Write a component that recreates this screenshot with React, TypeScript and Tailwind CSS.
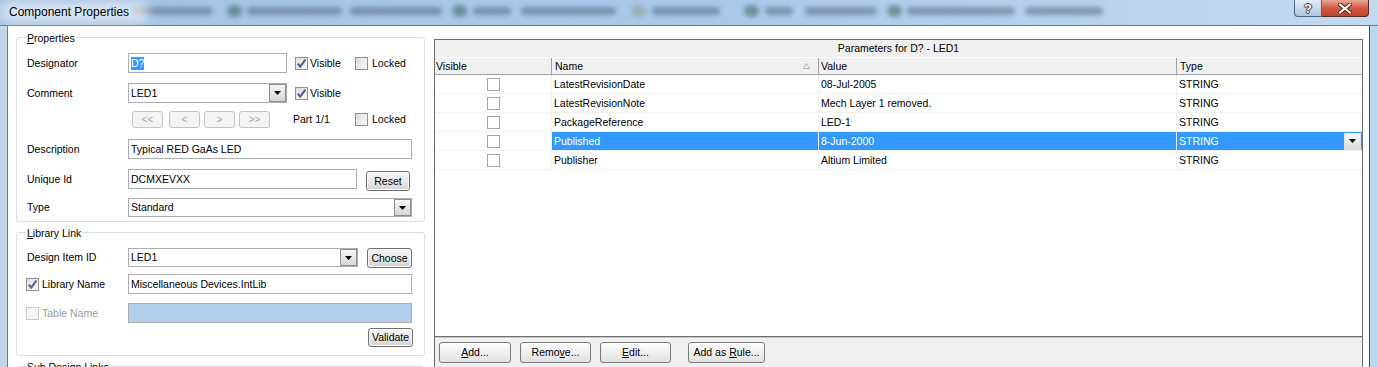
import React from 'react';

interface Param {
	name: string;
	value: string;
	selected?: boolean;
}

const params: Param[] = [
	{name: 'LatestRevisionDate', value: '08-Jul-2005'},
	{name: 'LatestRevisionNote', value: 'Mech Layer 1 removed.'},
	{name: 'PackageReference', value: 'LED-1'},
	{name: 'Published', value: '8-Jun-2000', selected: true},
	{name: 'Publisher', value: 'Altium Limited'},
];

const Check: React.FC<{checked?: boolean; disabled?: boolean}> = ({checked = false, disabled = false}) => (
	<span
		className={`flex h-[13px] w-[13px] shrink-0 items-center justify-center border ${
			disabled ? 'border-[#cacaca] bg-[#f4f4f4]' : 'border-[#8e8f8f] bg-linear-to-br from-[#dcdcdc] to-[#fbfbfb]'
		}`}
	>
		{checked && (
			<svg width="11" height="11" viewBox="0 0 11 11">
				<path d="M1.8 5.6 L4.2 8.6 L9.4 1.6" fill="none" stroke="#4a5f97" strokeWidth="2" />
			</svg>
		)}
	</span>
);

const Arrow = () => (
	<svg width="7" height="4" viewBox="0 0 7 4">
		<path d="M0 0h7L3.5 4z" fill="#000" />
	</svg>
);

const DropBtn: React.FC = () => (
	<span className="flex w-[17px] shrink-0 items-center justify-center border border-[#8d8d8d] bg-linear-to-b from-[#f6f6f6] to-[#d7d7d7]">
		<Arrow />
	</span>
);

const Combo: React.FC<{value: string; className: string}> = ({value, className}) => (
	<div className={`flex items-stretch border border-[#abadb3] bg-white ${className}`}>
		<span className="flex flex-1 items-center pl-[2px]">{value}</span>
		<DropBtn />
	</div>
);

const TextBox: React.FC<{value?: string; className: string}> = ({value, className}) => (
	<div className={`flex items-center border border-[#abadb3] pl-[2px] ${className}`}>{value}</div>
);

const Btn: React.FC<{children: React.ReactNode; className?: string}> = ({children, className = ''}) => (
	<div
		className={`flex shrink-0 items-center justify-center rounded-[3px] border border-[#707070] bg-linear-to-b from-[#f4f4f4] via-[#e9e9e9] to-[#d2d2d2] shadow-[inset_0_0_0_1px_#fbfbfb] ${className}`}
	>
		{children}
	</div>
);

const NavBtn: React.FC<{label: string; className?: string}> = ({label, className = ''}) => (
	<div
		className={`flex h-full w-[31px] items-center justify-center rounded-[3px] border border-[#c3c3c3] bg-[#f4f4f4] text-[10px] text-[#a3a3a3] ${className}`}
	>
		{label}
	</div>
);

const BarBtn: React.FC<{children: React.ReactNode; className: string}> = ({children, className}) => (
	<div
		className={`flex h-[21px] items-center justify-center rounded-[3px] border border-[#7a7a7a] bg-linear-to-b from-[#fdfdfd] to-[#e2e2e2] ${className}`}
	>
		<span className="whitespace-pre">{children}</span>
	</div>
);

const GroupLabel: React.FC<{children: React.ReactNode}> = ({children}) => (
	<span className="absolute -top-[6px] left-[9px] bg-white px-[1px] leading-[13px]">{children}</span>
);

// smeared task buttons seen through the glass caption
const Smear: React.FC<{className: string}> = ({className}) => (
	<span className={`h-[8px] shrink-0 rounded-[4px] bg-[#4a5d74] ${className}`} />
);

const Dot: React.FC<{className?: string}> = ({className = 'bg-[#2f5b47]'}) => (
	<span className={`h-[12px] w-[15px] shrink-0 rounded-full ${className}`} />
);

const TitleBar = () => (
	<div className="relative flex h-[26px] shrink-0 border-b border-[#5f7896] bg-linear-to-r from-[#a4c3e5] via-[#a9c8ea] to-[#c3daf1]">
		<div className="absolute inset-0 flex items-center pb-[4px] opacity-50 blur-[2.5px]">
			<Smear className="ml-[132px] w-[80px]" />
			<Dot className="ml-[15px] bg-[#2f5b47]" />
			<Smear className="ml-[5px] w-[95px]" />
			<Smear className="ml-[8px] w-[92px]" />
			<Dot className="ml-[10px] bg-[#2f5b47]" />
			<Smear className="ml-[6px] w-[38px]" />
			<Smear className="ml-[10px] w-[95px]" />
			<Dot className="ml-[15px] bg-[#8c9a7a]" />
			<Smear className="ml-[6px] w-[68px]" />
			<Dot className="ml-[24px] bg-[#2f5b47]" />
			<Smear className="ml-[6px] w-[28px]" />
			<Smear className="ml-[12px] w-[72px]" />
			<Dot className="ml-[10px] bg-[#2f5b47]" />
			<Smear className="ml-[5px] w-[108px]" />
			<Smear className="ml-[10px] w-[78px]" />
		</div>
		<div className="absolute left-0 top-[2px] h-[20px] w-[150px] rounded-full bg-white/60 blur-[6px]" />
		<span className="relative pl-[9px] pt-[5px] text-[12px] leading-[14px] text-black">Component Properties</span>
		<div className="relative ml-auto mr-[9px] flex h-[17px] self-start">
			<div className="flex w-[28px] items-center justify-center rounded-bl-[4px] border border-t-0 border-[#4f6686] bg-linear-to-b from-[#e4edf7] to-[#aec4de]">
				<span className="text-[13px] font-bold leading-[13px] text-white [text-shadow:-1px_0_#2a3b52,1px_0_#2a3b52,0_-1px_#2a3b52,0_1px_#2a3b52]">
					?
				</span>
			</div>
			<div className="flex w-[47px] items-center justify-center rounded-br-[4px] border border-l-0 border-t-0 border-[#5a2a24] bg-linear-to-b from-[#e8a797] via-[#d25a45] to-[#c3412d]">
				<svg width="14" height="11" viewBox="0 0 14 11">
					<path d="M2 1.5 L12 9.5 M12 1.5 L2 9.5" stroke="#4b1a14" strokeWidth="4" strokeLinecap="square" />
					<path d="M2 1.5 L12 9.5 M12 1.5 L2 9.5" stroke="#ffffff" strokeWidth="2.2" strokeLinecap="square" />
				</svg>
			</div>
		</div>
	</div>
);

const LeftPanel = () => (
	<div className="flex w-[426px] shrink-0 flex-col bg-white">
		{/* Properties */}
		<div className="relative ml-[8px] mt-[11px] w-[409px] shrink-0 rounded-[3px] border border-[#d5dfe5] pb-[4px] pl-[10px] pt-[15px]">
			<GroupLabel>
				<u>P</u>roperties
			</GroupLabel>
			<div className="flex h-[20px] items-center">
				<span className="w-[101px]">Designator</span>
				<div className="flex h-full w-[159px] items-center border border-[#abadb3] pl-[2px]">
					<span className="bg-[#3399ff] text-white">D?</span>
				</div>
				<div className="ml-[8px] flex w-[60px] items-center gap-[2px]">
					<Check checked />
					Visible
				</div>
				<div className="flex items-center gap-[4px]">
					<Check />
					Locked
				</div>
			</div>
			<div className="mt-[10px] flex h-[20px] items-center">
				<span className="w-[101px]">Comment</span>
				<Combo value="LED1" className="h-full w-[159px]" />
				<div className="ml-[8px] flex w-[60px] items-center gap-[2px]">
					<Check checked />
					Visible
				</div>
			</div>
			<div className="mt-[8px] flex h-[17px] items-center pl-[105px]">
				<NavBtn label="<<" />
				<NavBtn label="<" className="ml-[6px]" />
				<NavBtn label=">" className="ml-[4px]" />
				<NavBtn label=">>" className="ml-[4px]" />
				<span className="ml-[23px] w-[62px]">Part 1/1</span>
				<div className="flex items-center gap-[4px]">
					<Check />
					Locked
				</div>
			</div>
			<div className="mt-[11px] flex h-[20px] items-center">
				<span className="w-[101px]">Description</span>
				<TextBox value="Typical RED GaAs LED" className="h-full w-[284px]" />
			</div>
			<div className="mt-[10px] flex h-[22px] items-start">
				<span className="flex h-[20px] w-[101px] items-center">Unique Id</span>
				<TextBox value="DCMXEVXX" className="h-[20px] w-[229px]" />
				<Btn className="ml-[9px] mt-[2px] h-[20px] w-[44px]">Reset</Btn>
			</div>
			<div className="mt-[7px] flex h-[19px] items-center">
				<span className="w-[101px]">Type</span>
				<Combo value="Standard" className="h-full w-[284px]" />
			</div>
		</div>

		{/* Library Link */}
		<div className="relative ml-[8px] mt-[10px] w-[409px] shrink-0 rounded-[3px] border border-[#d5dfe5] pb-[8px] pl-[10px] pr-[11px] pt-[15px]">
			<GroupLabel>
				<u>L</u>ibrary Link
			</GroupLabel>
			<div className="flex h-[20px] items-start">
				<span className="flex h-[19px] w-[101px] items-center">Design Item ID</span>
				<Combo value="LED1" className="h-[19px] w-[230px]" />
				<Btn className="ml-[9px] h-[20px] w-[45px]">Choose</Btn>
			</div>
			<div className="mt-[6px] flex h-[20px] items-center">
				<div className="-ml-[1px] flex w-[102px] items-center gap-[3px]">
					<Check checked />
					Library Name
				</div>
				<TextBox value="Miscellaneous Devices.IntLib" className="h-full w-[284px]" />
			</div>
			<div className="mt-[9px] flex h-[20px] items-center">
				<div className="-ml-[1px] flex w-[102px] items-center gap-[3px] text-[#9a9a9a]">
					<Check disabled />
					Table Name
				</div>
				<TextBox className="h-full w-[284px] border-[#a9bfd6] bg-[#b2cfec]" />
			</div>
			<div className="mt-[5px] flex h-[19px] justify-end">
				<Btn className="h-full w-[45px]">Validate</Btn>
			</div>
		</div>

		{/* Sub Design Links */}
		<div className="relative ml-[8px] mt-[10px] h-[40px] w-[409px] shrink-0 rounded-[3px] border border-[#d5dfe5]">
			<GroupLabel>Sub Design Links</GroupLabel>
		</div>
	</div>
);

const cols = 'grid grid-cols-[117px_267px_358px_185px]';

const ParamGrid = () => (
	<div className="mt-[13px] flex w-[929px] shrink-0 flex-col border-x border-t border-[#6d6d6d] bg-white">
		<div className="flex h-[18px] shrink-0 items-center justify-center border-b border-white bg-[#f0f0f0]">
			Parameters for D? - LED1
		</div>
		<div className={`${cols} h-[17px] shrink-0 border-b border-[#a0a0a0] bg-[#f0f0f0]`}>
			<div className="flex items-center border-r border-[#a0a0a0] pl-[1px]">Visible</div>
			<div className="flex items-center border-r border-[#a0a0a0] pl-[3px]">
				Name
				<svg className="ml-auto mr-[8px]" width="7" height="6" viewBox="0 0 7 6">
					<path d="M0.5 5.5 L3.5 0.5 L6.5 5.5 Z" fill="none" stroke="#b5b5b5" />
				</svg>
			</div>
			<div className="flex items-center border-r border-[#a0a0a0] pl-[2px]">Value</div>
			<div className="flex items-center pl-[3px]">Type</div>
		</div>
		{params.map(p => (
			<div key={p.name} className={`${cols} h-[19px] shrink-0`}>
				<div className="flex items-center justify-center border-b border-r border-[#f0f0f0]">
					<span className="h-[13px] w-[13px] border border-[#a5a5a5] bg-white" />
				</div>
				<div
					className={`flex items-center border-b border-r border-[#f0f0f0] pl-[2px] ${
						p.selected ? 'bg-[#3399ff] text-white' : ''
					}`}
				>
					{p.name}
				</div>
				<div
					className={`flex items-center border-b border-r border-[#f0f0f0] pl-[2px] ${
						p.selected ? 'bg-[#3399ff] text-white' : ''
					}`}
				>
					{p.value}
				</div>
				<div
					className={`flex items-center border-b border-[#f0f0f0] pl-[2px] ${
						p.selected ? 'bg-[#3399ff] pr-[1px] text-white' : ''
					}`}
				>
					STRING
					{p.selected && (
						<span className="ml-auto flex h-[17px] w-[17px] items-center justify-center border border-[#d6e4f2] bg-linear-to-b from-[#f8f8f8] to-[#dcdcdc]">
							<Arrow />
						</span>
					)}
				</div>
			</div>
		))}
		<div className="flex-1" />
		<div className="flex h-[31px] shrink-0 items-start gap-[9px] border-t border-[#6d6d6d] bg-[#f0f0f0] pl-[4px] pt-[5px] shadow-[inset_0_1px_0_#c9c9c9]">
			<BarBtn className="w-[72px]">
				<u>A</u>dd...
			</BarBtn>
			<BarBtn className="w-[71px]">
				Remo<u>v</u>e...
			</BarBtn>
			<BarBtn className="w-[71px]">
				<u>E</u>dit...
			</BarBtn>
			<BarBtn className="ml-[8px] w-[77px]">
				Add as <u>R</u>ule...
			</BarBtn>
		</div>
	</div>
);

export default function App() {
	return (
		<div className="flex h-[367px] w-[1378px] flex-col overflow-hidden bg-white font-['Liberation_Sans',Arial,sans-serif] text-[10.5px] leading-[13px] text-black">
			<TitleBar />
			<div className="flex min-h-0 flex-1">
				<div className="w-[8px] shrink-0 border-r border-[#6a7b8f] bg-[#c3d5e9]" />
				<LeftPanel />
				<ParamGrid />
				<div className="w-[6px] shrink-0 bg-white" />
				<div className="w-[9px] shrink-0 border-l border-[#3e4f63] bg-[#bcd6f0]" />
			</div>
		</div>
	);
}
